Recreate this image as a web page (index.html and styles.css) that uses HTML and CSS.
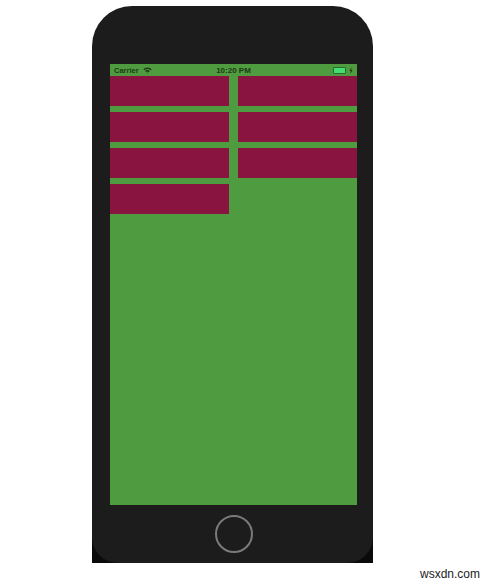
FILE: index.html
```html
<!DOCTYPE html>
<html>
<head>
<meta charset="utf-8">
<link rel="stylesheet" href="styles.css">
</head>
<body>
<div class="stage">
  <div class="base">
    <div class="phone">
      <div class="screen">
        <div class="status">
          <div class="left">Carrier
            <svg class="wifi" width="9" height="7" viewBox="0 0 9 7"><path d="M0.3 2.3 A6 6 0 0 1 8.7 2.3 L7.7 3.3 A4.6 4.6 0 0 0 1.3 3.3 Z M2.1 4.1 A3.4 3.4 0 0 1 6.9 4.1 L5.9 5.1 A2 2 0 0 0 3.1 5.1 Z M3.8 5.8 L4.5 6.6 L5.2 5.8 A1 1 0 0 0 3.8 5.8 Z" fill="#1d3a17"/></svg>
          </div>
          <div class="time">10:20 PM</div>
          <div class="right">
            <span class="battery"></span>
            <svg class="bolt" width="4" height="7" viewBox="0 0 4 7"><path d="M2.6 0 L0.4 3.8 L1.9 3.8 L1.3 7 L3.6 2.9 L2.1 2.9 Z" fill="#1d3a17"/></svg>
          </div>
        </div>
        <div class="grid">
          <div class="box"></div>
          <div class="box"></div>
          <div class="box"></div>
          <div class="box"></div>
          <div class="box"></div>
          <div class="box"></div>
          <div class="box"></div>
        </div>
      </div>
      <div class="home"></div>
    </div>
  </div>
</div>
<div class="mark">wsxdn.com</div>
</body>
</html>
```
FILE: styles.css
```css
html, body {
  margin: 0;
  padding: 0;
  background: #ffffff;
}
body {
  width: 491px;
  height: 583px;
  overflow: hidden;
  font-family: "Liberation Sans", Arial, sans-serif;
}
.stage {
  padding-top: 6px;
  padding-left: 92px;
}
.base {
  width: 281px;
  height: 557px;
  background: linear-gradient(to bottom, #ffffff 0, #ffffff 60%, #0a0a0a 60%);
}
.phone {
  width: 281px;
  height: 557px;
  box-sizing: border-box;
  background: #1c1c1c;
  border-radius: 40px 40px 26px 26px;
  padding: 58px 16px 0 18px;
  display: flex;
  flex-direction: column;
  align-items: flex-start;
}
.screen {
  width: 247px;
  height: 441px;
  background: #4f9b3f;
  display: flex;
  flex-direction: column;
}
.status {
  height: 12px;
  display: flex;
  align-items: center;
  justify-content: space-between;
  padding: 0 4px;
  font-size: 7.5px;
  font-weight: bold;
  color: #1d3a17;
}
.status .left {
  display: flex;
  align-items: center;
  gap: 4px;
  width: 60px;
}
.status .time {
  font-size: 8px;
}
.status .right {
  width: 60px;
  display: flex;
  justify-content: flex-end;
  align-items: center;
  gap: 3px;
}
.battery {
  width: 11px;
  height: 5px;
  border: 0.5px solid #2c6a2a;
  background: #43dd74;
  border-radius: 1px;
  display: block;
}
.grid {
  display: grid;
  grid-template-columns: 119px 119px;
  column-gap: 9px;
  row-gap: 6px;
  grid-auto-rows: 30px;
}
.box {
  background: #89143f;
}
.home {
  margin-top: 10px;
  margin-left: 105px;
  width: 34px;
  height: 34px;
  border: 2px solid #7a7a7a;
  border-radius: 50%;
}
.mark {
  text-align: right;
  padding-right: 11px;
  margin-top: 4px;
  font-size: 12px;
  color: #222222;
}
```
